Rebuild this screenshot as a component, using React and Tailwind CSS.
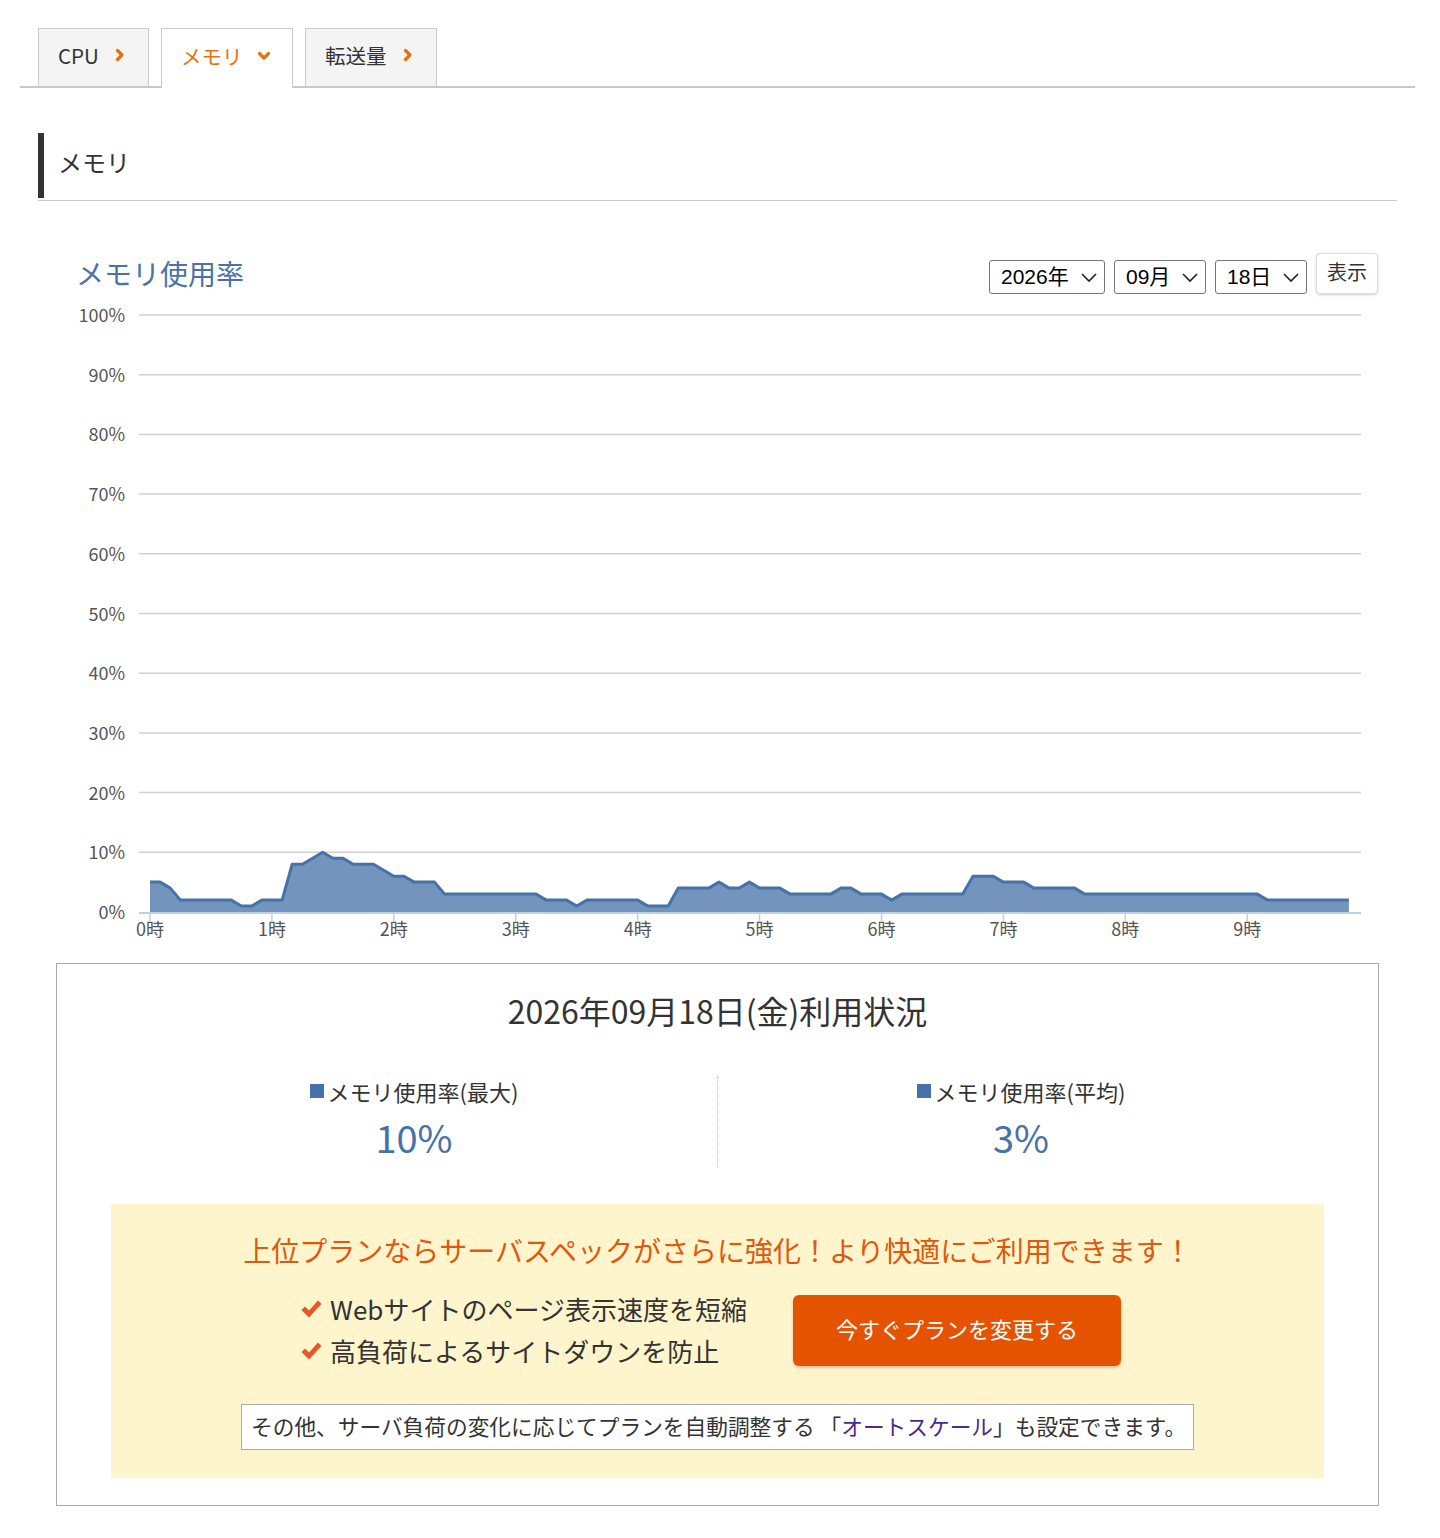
import React from "react";

const FONT = { fontFamily: '"Noto Sans CJK JP", "Noto Sans", sans-serif' };
const ARIAL = { fontFamily: '"Liberation Sans", "Noto Sans CJK JP", sans-serif' };

const RUNS = [
  [5, 2], [4, 1], [2, 6], [1, 2], [2, 3], [8, 2], [9, 1], [10, 1], [9, 2], [8, 3], [7, 1], [6, 2], [5, 3],
  [3, 10], [2, 3], [1, 1], [2, 6], [1, 3], [4, 4], [5, 1], [4, 2], [5, 1], [4, 3], [3, 5], [4, 2], [3, 3],
  [2, 1], [3, 7], [6, 3], [5, 3], [4, 5], [3, 18], [2, 9],
];
const DATA = RUNS.flatMap(([v, n]) => Array(n).fill(v));

const STEP = 10.16;
const X0 = 94;
const Y0 = 618;
const YS = 5.97;

function Chevron({ down }) {
  return (
    <svg width="14" height="14" viewBox="0 0 14 14" className="ml-[14px]">
      {down ? (
        <polyline points="2.5,4.5 7,9 11.5,4.5" fill="none" stroke="#e8700e" strokeWidth="3.2" strokeLinecap="round" strokeLinejoin="round" />
      ) : (
        <polyline points="4.5,2.5 9,7 4.5,11.5" fill="none" stroke="#e8700e" strokeWidth="3.2" strokeLinecap="round" strokeLinejoin="round" />
      )}
    </svg>
  );
}

function Tab({ label, active, width }) {
  return (
    <div
      className={
        "flex items-center border border-b-0 border-[#cccccc] pl-[19px] pb-[5px] text-[20.5px] " +
        (active ? "bg-white text-[#e8700e] -mb-[2px] h-[60px]" : "bg-[#f4f4f4] text-[#333333] h-[58px]")
      }
      style={{ width }}
    >
      <span>{label}</span>
      <Chevron down={active} />
    </div>
  );
}

function Select({ label, width }) {
  return (
    <div
      className="flex items-center justify-between h-[34px] border border-[#767676] rounded-[3px] bg-white pl-[11px] pr-[6px] text-[21px] text-black"
      style={{ width, ...ARIAL }}
    >
      <span>{label}</span>
      <svg width="18" height="12" viewBox="0 0 18 12">
        <polyline points="2,3 9,10 16,3" fill="none" stroke="#222" strokeWidth="1.6" />
      </svg>
    </div>
  );
}

function Chart() {
  const pts = DATA.map((v, i) => [X0 + i * STEP, Y0 - v * YS]);
  const line = pts.map((p, i) => (i === 0 ? "M" : "L") + p[0].toFixed(1) + "," + p[1].toFixed(1)).join(" ");
  const last = pts[pts.length - 1];
  const area = line + ` L${last[0].toFixed(1)},${Y0} L${X0},${Y0} Z`;
  const grid = [100, 90, 80, 70, 60, 50, 40, 30, 20, 10];
  return (
    <svg width="1324" height="669" viewBox="0 0 1324 669" className="block">
      {grid.map((g) => {
        const y = Y0 - g * YS;
        return (
          <g key={g}>
            <line x1="83" x2="1305" y1={y} y2={y} stroke="#d0d0d0" strokeWidth="1.5" />
            <text x="69" y={y + 7} textAnchor="end" fontSize="18" fill="#555" style={FONT}>
              {g}%
            </text>
          </g>
        );
      })}
      <text x="69" y={Y0 + 7} textAnchor="end" fontSize="18" fill="#555" style={FONT}>
        0%
      </text>
      <path d={area} fill="#7395bd" />
      <path d={line} fill="none" stroke="#4572a7" strokeWidth="3" strokeLinejoin="round" />
      <line x1="83" x2="1305" y1={Y0 + 1} y2={Y0 + 1} stroke="#c0d0e0" strokeWidth="2" />
      {Array.from({ length: 10 }).map((_, h) => {
        const x = X0 + h * 12 * STEP;
        return (
          <g key={h}>
            <line x1={x} x2={x} y1={Y0} y2={Y0 + 9} stroke="#c0d0e0" strokeWidth="1.5" />
            <text x={x} y={Y0 + 24} textAnchor="middle" fontSize="18" fill="#555" style={FONT}>
              {h}時
            </text>
          </g>
        );
      })}
    </svg>
  );
}

function Check() {
  return (
    <svg width="22" height="20" viewBox="0 0 22 20" className="mr-[8px] shrink-0">
      <path d="M1.5,11 L5,7.5 L9,11.5 L18,1.5 L21.5,5 L9,18.5 Z" fill="#e8572a" />
    </svg>
  );
}

export default function App() {
  return (
    <div className="bg-white w-[1440px] min-h-[1538px] pt-[28px] text-[#333333]" style={FONT}>
      {/* tabs */}
      <div className="ml-[20px] mr-[25px] border-b-2 border-[#c8c8c8] flex items-end gap-[12px] pl-[18px]">
        <Tab label="CPU" width={111} />
        <Tab label="メモリ" active width={132} />
        <Tab label="転送量" width={132} />
      </div>

      {/* heading */}
      <div className="mt-[45px] ml-[38px] mr-[43px] border-b border-[#cccccc] pb-[2px]">
        <div className="h-[65px] border-l-[6px] border-[#333333] flex items-center pl-[14px] pb-[7px] text-[24px] text-[#333333]">
          メモリ
        </div>
      </div>

      {/* chart section */}
      <div className="ml-[56px] mr-[61px]">
        <div className="mt-[50px] h-[43px] flex items-end justify-between pl-[20px] pr-[1px]">
          <div className="text-[28px] text-[#4a72a8] leading-[40px] mb-[1px]">メモリ使用率</div>
          <div className="flex items-end gap-[9px]">
            <Select label="2026年" width={116} />
            <Select label="09月" width={92} />
            <Select label="18日" width={92} />
            <div className="h-[41px] w-[62px] flex items-center justify-center pb-[3px] border border-[#dddddd] rounded-[4px] bg-white shadow-[0_1px_3px_rgba(0,0,0,0.18)] text-[20px] text-[#333]">
              表示
            </div>
          </div>
        </div>
        <Chart />

        {/* summary box */}
        <div className="border border-[#aaaaaa] pt-[23px] pb-[27px]">
          <div className="text-center text-[32px] leading-[46px] text-[#333333]">2026年09月18日(金)利用状況</div>
          <div className="mx-[54px] mt-[43px] flex">
            <div className="w-1/2 flex flex-col items-center pb-[7px]">
              <div className="text-[22px] leading-[30px] flex items-center">
                <span className="inline-block w-[14px] h-[14px] bg-[#4572a7] mr-[4px]" />
                メモリ使用率(最大)
              </div>
              <div className="mt-[8px] text-[38px] leading-[46px] text-[#4572a7]">10%</div>
            </div>
            <div className="border-l border-dotted border-[#bbbbbb]" />
            <div className="w-1/2 flex flex-col items-center pb-[7px]">
              <div className="text-[22px] leading-[30px] flex items-center">
                <span className="inline-block w-[14px] h-[14px] bg-[#4572a7] mr-[4px]" />
                メモリ使用率(平均)
              </div>
              <div className="mt-[8px] text-[38px] leading-[46px] text-[#4572a7]">3%</div>
            </div>
          </div>

          {/* yellow box */}
          <div className="mx-[54px] mt-[37px] bg-[#fff5cc] pt-[26px] pb-[28px] flex flex-col items-center">
            <div className="text-[28px] leading-[40px] text-[#e0580d]">
              上位プランならサーバスペックがさらに強化！より快適にご利用できます！
            </div>
            <div className="mt-[18px] flex items-center gap-[46px] pr-[14px]">
              <div className="flex flex-col text-[26px] leading-[42px] text-[#333]">
                <div className="flex items-center">
                  <Check />
                  Webサイトのページ表示速度を短縮
                </div>
                <div className="flex items-center">
                  <Check />
                  高負荷によるサイトダウンを防止
                </div>
              </div>
              <div className="w-[328px] h-[71px] rounded-[6px] bg-[#e55300] shadow-[0_2px_3px_rgba(0,0,0,0.2)] flex items-center justify-center pb-[3px] text-white text-[22px]">
                今すぐプランを変更する
              </div>
            </div>
            <div className="mt-[32px] w-[953px] h-[46px] bg-white border border-[#aaaaaa] flex items-center pl-[9px] pb-[2px] text-[21.7px] text-[#333]">
              その他、サーバ負荷の変化に応じてプランを自動調整する 「<span className="text-[#4b2a8f]">オートスケール</span>」も設定できます。
            </div>
          </div>
        </div>
      </div>
    </div>
  );
}
